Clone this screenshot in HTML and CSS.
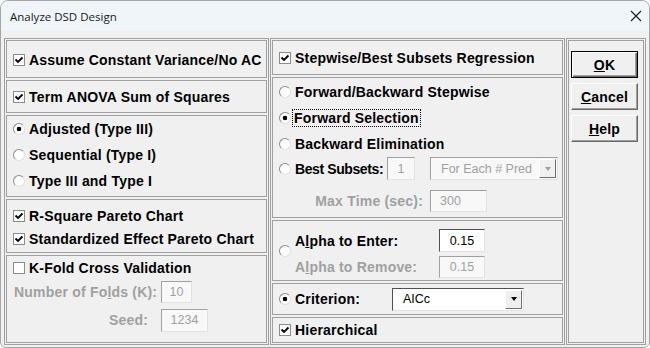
FILE: index.html
```html
<!DOCTYPE html>
<html>
<head>
  <meta charset="utf-8">
  <title>Analyze DSD Design</title>
  <link rel="stylesheet" href="styles.css">
</head>
<body>
  <div class="window">
    <div class="titlebar">
      <span class="title">Analyze DSD Design</span>
      <svg class="close" width="12" height="12" viewBox="0 0 12 12"><path d="M1 1L11 11M11 1L1 11" stroke="#1a1a1a" stroke-width="1.1"/></svg>
    </div>

    <div class="dialog">
      <!-- left column: model options -->
      <div class="col col-left">
        <div class="sec sec-a">
          <div class="row"><span class="chk"><svg width="10" height="10" viewBox="0 0 10 10"><path d="M1.5 4.5L4 7L8.5 2.5" fill="none" stroke="#000" stroke-width="1.8"/></svg></span>Assume Constant Variance/No AC</div>
        </div>
        <div class="sec sec-b">
          <div class="row"><span class="chk"><svg width="10" height="10" viewBox="0 0 10 10"><path d="M1.5 4.5L4 7L8.5 2.5" fill="none" stroke="#000" stroke-width="1.8"/></svg></span>Term ANOVA Sum of Squares</div>
        </div>
        <div class="sec sec-c">
          <div class="row h26"><span class="rad on"></span>Adjusted (Type III)</div>
          <div class="row h26"><span class="rad"></span>Sequential (Type I)</div>
          <div class="row h26"><span class="rad"></span>Type III and Type I</div>
        </div>
        <div class="sec sec-d">
          <div class="row h23"><span class="chk"><svg width="10" height="10" viewBox="0 0 10 10"><path d="M1.5 4.5L4 7L8.5 2.5" fill="none" stroke="#000" stroke-width="1.8"/></svg></span>R-Square Pareto Chart</div>
          <div class="row h23"><span class="chk"><svg width="10" height="10" viewBox="0 0 10 10"><path d="M1.5 4.5L4 7L8.5 2.5" fill="none" stroke="#000" stroke-width="1.8"/></svg></span>Standardized Effect Pareto Chart</div>
        </div>
        <div class="sec sec-e">
          <div class="row h24"><span class="chk"></span>K-Fold Cross Validation</div>
          <div class="row h24">
            <span class="lbl off folds-lbl">Number of Fo<u>l</u>ds (K):</span>
            <span class="edit off folds-box">10</span>
          </div>
          <div class="row h24 seed-row">
            <span class="lbl off seed-lbl">Seed:</span>
            <span class="edit off seed-box">1234</span>
          </div>
        </div>
      </div>

      <!-- middle column: stepwise / best subsets -->
      <div class="col col-mid">
        <div class="sec sec-s1">
          <div class="row"><span class="chk"><svg width="10" height="10" viewBox="0 0 10 10"><path d="M1.5 4.5L4 7L8.5 2.5" fill="none" stroke="#000" stroke-width="1.8"/></svg></span>Stepwise/Best Subsets Regression</div>
        </div>
        <div class="sec sec-s2">
          <div class="row h26"><span class="rad"></span>Forward/Backward Stepwise</div>
          <div class="row h26"><span class="rad on"></span><span class="focus">Forward Selection</span></div>
          <div class="row h26"><span class="rad"></span>Backward Elimination</div>
          <div class="row subsets-row">
            <span class="rad"></span><span class="subsets-lbl">Best Subsets:</span>
            <span class="edit off one-box">1</span>
            <span class="combo off each-combo"><span class="combo-text">For Each # Pred</span><span class="arrow"></span></span>
          </div>
          <div class="row maxtime-row">
            <span class="lbl off maxtime-lbl">Max Time (sec):</span>
            <span class="edit off maxtime-box">300</span>
          </div>
        </div>
        <div class="sec sec-s3">
          <span class="rad"></span>
          <div class="alpha-grid">
            <span class="lbl">A<u>l</u>pha to Enter:</span>
            <span class="edit on alpha-box">0.15</span>
            <span class="lbl off">A<u>l</u>pha to Remove:</span>
            <span class="edit off alpha-box">0.15</span>
          </div>
        </div>
        <div class="sec sec-s4">
          <div class="row"><span class="rad on"></span><span class="crit-lbl">Criterion:</span>
            <span class="combo on crit-combo"><span class="combo-text">AICc</span><span class="arrow"></span></span>
          </div>
        </div>
        <div class="sec sec-s5">
          <div class="row"><span class="chk"><svg width="10" height="10" viewBox="0 0 10 10"><path d="M1.5 4.5L4 7L8.5 2.5" fill="none" stroke="#000" stroke-width="1.8"/></svg></span>Hierarchical</div>
        </div>
      </div>

      <!-- right column: buttons -->
      <div class="col col-btns">
        <div class="sec sec-btns">
          <button class="btn default"><u>O</u>K</button>
          <button class="btn"><u>C</u>ancel</button>
          <button class="btn"><u>H</u>elp</button>
        </div>
      </div>
    </div>
  </div>
</body>
</html>
```

FILE: styles.css
```css
* {
  box-sizing: border-box;
}

body {
  margin: 0;
  background: #ffffff;
  font-family: "Liberation Sans", Arial, sans-serif;
}

.window {
  width: 650px;
  height: 348px;
  border: 1px solid #a6a6a6;
  border-radius: 8px 8px 6px 6px;
  background: #f0f0f0;
  overflow: hidden;
  display: flex;
  flex-direction: column;
}

.titlebar {
  height: 30px;
  flex: none;
  background: #eff5f9;
  display: flex;
  align-items: center;
  justify-content: space-between;
  padding: 0 6px 0 9px;
}

.title {
  font-family: "Open Sans", sans-serif;
  font-size: 11.5px;
  color: #1a1a1a;
}

.close {
  margin-right: 1px;
}

.dialog {
  flex: 1;
  display: flex;
  gap: 1px;
  padding: 7px 3px 2px 3px;
  font-size: 14px;
  font-weight: bold;
  letter-spacing: 0.2px;
  color: #000;
}

.col {
  height: 307px;
  border: 1px solid #a0a0a0;
  padding: 1px;
  display: flex;
  flex-direction: column;
  gap: 2px;
}

.col-left { width: 265px; }
.col-mid { width: 295px; }
.col-btns { width: 80px; }

.sec {
  border: 1px solid #a0a0a0;
  padding-left: 6px;
  display: flex;
  flex-direction: column;
}

.sec-a { height: 38px; justify-content: center; padding-top: 2px; }
.sec-b { height: 33px; justify-content: center; }
.sec-c { height: 82px; }
.sec-d { height: 54px; padding-top: 4px; }
.sec-e { height: 88px; }

.sec-s1 { height: 35px; justify-content: center; }
.sec-s2 { height: 141px; padding-top: 1px; }
.sec-s3 { height: 61px; flex-direction: row; align-items: center; gap: 4px; }
.sec-s4 { height: 32px; justify-content: center; }
.sec-s5 { height: 26px; justify-content: center; }

.sec-btns {
  flex: 1;
  padding: 10px 0 0 2px;
  gap: 5px;
}

.row {
  display: flex;
  align-items: center;
  gap: 4px;
  white-space: nowrap;
}

.h23 { height: 23px; }
.h24 { height: 24px; }
.h26 { height: 26px; }

/* check boxes and radio buttons */
.chk {
  width: 12px;
  height: 12px;
  flex: none;
  border: 1px solid #8c8c8c;
  background: #fff;
  display: inline-flex;
  align-items: center;
  justify-content: center;
}

.rad {
  width: 12px;
  height: 12px;
  flex: none;
  border-radius: 50%;
  border: 1px solid;
  border-color: #8c8c8c #e0e0e0 #e0e0e0 #8c8c8c;
  background: #fff;
}

.rad.on {
  background: radial-gradient(circle, #000 0 2px, #fff 2.6px);
}

.focus {
  outline: 1px dotted #000;
  outline-offset: 0;
  padding: 0 1px;
  margin-left: -2px;
}

.off {
  color: #a0a0a0;
}

/* edit boxes */
.edit {
  height: 22px;
  flex: none;
  border: 1px solid;
  display: flex;
  align-items: center;
  justify-content: center;
  font-size: 12.5px;
  font-weight: normal;
  letter-spacing: 0;
}

.edit.on {
  background: #fff;
  color: #000;
  border-color: #505050 #e3e3e3 #e3e3e3 #505050;
}

.edit.off {
  background: #f8f8f8;
  border-color: #a0a0a0 #e3e3e3 #e3e3e3 #a0a0a0;
}

.folds-lbl {
  width: 140px;
  margin-left: 1px;
  text-align: right;
}

.folds-box {
  width: 31px;
  margin-left: 3px;
}

.seed-row {
  margin-top: 4px;
}

.seed-lbl {
  width: 134px;
  margin-left: 1px;
  text-align: right;
}

.seed-box {
  width: 47px;
  height: 23px;
  margin-left: 9px;
}

.subsets-row {
  height: 23px;
}

.subsets-lbl {
  width: 88px;
  letter-spacing: -0.4px;
}

.one-box {
  width: 28px;
  height: 23px;
}

.combo {
  height: 23px;
  flex: none;
  border: 1px solid;
  display: flex;
  align-items: center;
  font-size: 12.5px;
  font-weight: normal;
  letter-spacing: 0;
}

.combo-text {
  flex: 1;
  padding-left: 10px;
}

.combo.off {
  background: #f8f8f8;
  border-color: #a0a0a0 #e3e3e3 #e3e3e3 #a0a0a0;
}

.combo.on {
  background: #fff;
  color: #000;
  border-color: #505050 #e3e3e3 #e3e3e3 #505050;
}

.each-combo {
  width: 128px;
  margin-left: 11px;
}

.crit-combo {
  width: 132px;
}

.arrow {
  width: 17px;
  height: 19px;
  margin-right: 1px;
  background: #f0f0f0;
  border: 1px solid;
  border-color: #fff #707070 #707070 #fff;
  display: flex;
  align-items: center;
  justify-content: center;
}

.arrow::before {
  content: "";
  border-left: 3.5px solid transparent;
  border-right: 3.5px solid transparent;
  border-top: 4px solid #000;
}

.combo.off .arrow::before {
  border-top-color: #a0a0a0;
}

.maxtime-row {
  height: 22px;
  margin-top: 10px;
  gap: 7px;
}

.maxtime-lbl {
  width: 144px;
  text-align: right;
}

.maxtime-box {
  width: 57px;
  justify-content: flex-start;
  padding-left: 9px;
}

.alpha-grid {
  align-self: flex-start;
  margin-top: 8px;
  display: grid;
  grid-template-columns: 144px 46px;
  grid-template-rows: 23px 22px;
  row-gap: 4px;
  align-items: center;
}

.alpha-box {
  height: 100%;
}

.crit-lbl {
  width: 93px;
}

/* buttons */
.btn {
  width: 67px;
  height: 27px;
  background: #f0f0f0;
  border: 1px solid;
  border-color: #fff #696969 #696969 #fff;
  box-shadow: inset -1px -1px #a0a0a0;
  font-family: "Liberation Sans", Arial, sans-serif;
  font-size: 14px;
  font-weight: bold;
  letter-spacing: 0.2px;
  color: #000;
  padding: 0;
}

.btn.default {
  border-color: #000;
  box-shadow: inset 1px 1px #fff, inset -1px -1px #696969, inset -2px -2px #a0a0a0;
}
```
